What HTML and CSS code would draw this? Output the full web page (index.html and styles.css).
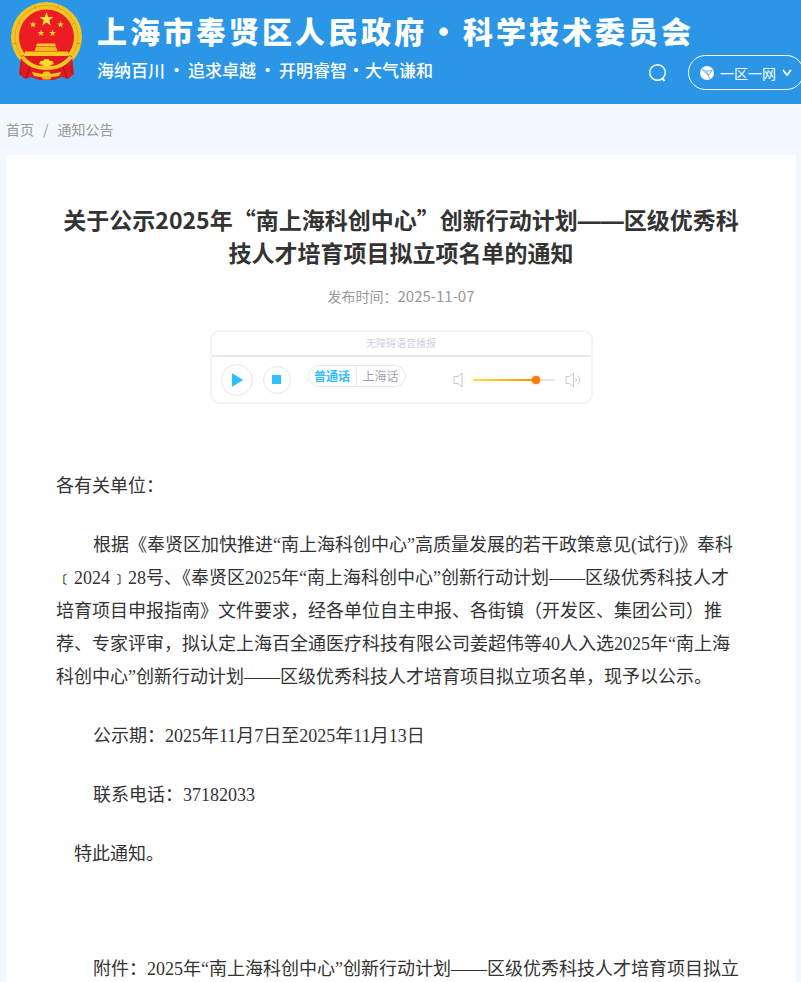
FILE: index.html
```html
<!DOCTYPE html>
<html lang="zh-CN">
  <head>
    <meta charset="UTF-8" />
    <meta name="viewport" content="width=device-width, initial-scale=1.0" />
    <title>上海市奉贤区科学技术委员会 - 通知公告</title>
    <link rel="stylesheet" href="styles.css">
  </head>
  <body>
    <header class="header">
      <svg class="emblem" viewBox="0 0 76 84" aria-hidden="true">
        <ellipse cx="38.500" cy="37" rx="35.500" ry="35" fill="#f3c424" />
        <circle cx="38.500" cy="37" r="31.500" fill="none" stroke="#e2a61c" stroke-width="1" />
        <path d="M10 22 L13 25 M67 22 L64 25 M4 44 L9 43 M73 44 L68 43 M26 5 L28 9 M51 5 L49 9" stroke="#d99a17" fill="none" />
        <circle cx="38.500" cy="37" r="27.500" fill="#ec1c24" />
        <path d="M13 56 L22 54 H55 L64 56 L66 74 L60 79 L54 77 L46 80 H31 L23 77 L17 79 L11 74 Z" fill="#e01a22" />
        <path d="M38.500 12 L40.200 17 L45.500 17.100 L41.300 20.300 L42.800 25.400 L38.500 22.400 L34.200 25.400 L35.700 20.300 L31.500 17.100 L36.800 17 Z" fill="#ffe23a" />
        <g fill="#ffd92e">
          <path id="star" d="M25 21 L25.800 23.500 L28.400 23.500 L26.300 25 L27.100 27.500 L25 26 L22.900 27.500 L23.700 25 L21.600 23.500 L24.200 23.500 Z" />
          <use href="#star" x="27.500" />
          <use href="#star" x="8" y="8.500" />
          <use href="#star" x="19.500" y="8.500" />
        </g>
        <path d="M29 43.500 H47 L48 46.500 H28 Z" fill="#f7c821" />
        <path d="M28 47 H48 L49.500 51 H26.500 Z" fill="#f0ba1e" />
        <path d="M17 51.500 H60 L61 56 H16 Z" fill="#f7c821" />
        <path d="M16 56 C20 61 26 65 33 66 L38.500 64.500 L44 66 C51 65 57 61 61 56 L65 57 C59 66 50 70 38.500 70 S18 66 12 57 Z" fill="#f7c821" />
        <path d="M31 64 L32.500 61 L35 61 L36.500 59 L40.500 59 L42 61 L44.500 61 L46 64 L38.500 66.500 Z" fill="#ffd92e" />
        <path d="M24 72 L34 74 L36 71.500 H41 L43 74 L53 72 L51 76 L44 77 L38.500 78 L33 77 L26 76 Z" fill="#f7c821" />
        <path d="M33 76 L44 76 L42 79.500 H35 Z" fill="#f3b81c" />
        <path d="M22 67 L18 78 M55 67 L59 78" stroke="#a31018" fill="none" />
        <path d="M13 63 V74 M64 63 V74" stroke="#b8141c" fill="none" />
      </svg>
      <div class="brand">
        <h1 class="brand-name">上海市奉贤区人民政府<span class="brand-dot">•</span>科学技术委员会</h1>
        <div class="brand-row">
          <div class="slogan">
            <span>海纳百川</span><span class="slogan-dot">·</span><span>追求卓越</span><span class="slogan-dot">·</span><span>开明睿智</span><span class="slogan-dot small">·</span><span>大气谦和</span>
          </div>
          <div class="tools">
            <button class="search-button" type="button" aria-label="搜索">
              <svg width="20" height="20" viewBox="0 0 20 20" fill="none" stroke="#fff" stroke-width="1.500">
                <circle cx="9.500" cy="9.500" r="7.800" />
                <path d="M14 15 L16.500 17.800" stroke-width="2" />
              </svg>
            </button>
            <button class="site-button" type="button">
              <svg width="14" height="14" viewBox="0 0 14 14">
                <circle cx="7" cy="7" r="7" fill="#fff" />
                <path d="M2 3.500 L6.500 5.200 L12 4.500 L8.500 9.500 Z M6.500 5.200 L9.500 12.500" stroke="#5cadeb" stroke-width="0.900" fill="none" />
              </svg>
              <span>一区一网</span>
              <svg width="10" height="8" viewBox="0 0 10 8" fill="none" stroke="#fff" stroke-width="1.800"><path d="M1 1 L5 6 L9 1" /></svg>
            </button>
          </div>
        </div>
      </div>
    </header>

    <nav class="breadcrumb">
      <a href="#">首页</a><span class="slash">/</span><a href="#">通知公告</a>
    </nav>

    <main class="article">
      <h2 class="article-title">关于公示2025年“南上海科创中心”创新行动计划<span class="dash">——</span>区级优秀科技人才培育项目拟立项名单的通知</h2>
      <div class="article-date">发布时间：<time>2025-11-07</time></div>

      <div class="player">
        <div class="player-title">无障碍语音播报</div>
        <div class="player-controls">
          <button class="play-button" type="button" aria-label="播放">
            <svg width="12" height="14" viewBox="0 0 12 14"><path d="M1.500 1 L11.500 7 L1.500 13 Z" fill="#2fc0fb" stroke="#2fc0fb" stroke-linejoin="round" /></svg>
          </button>
          <button class="stop-button" type="button" aria-label="停止">
            <svg width="9" height="9" viewBox="0 0 9 9"><rect width="9" height="9" fill="#2fc0fb" /></svg>
          </button>
          <div class="lang-switch">
            <button class="lang-button active" type="button">普通话</button>
            <button class="lang-button" type="button">上海话</button>
          </div>
          <div class="volume">
            <svg width="16" height="16" viewBox="0 0 16 16" fill="none" stroke="#c9c9d2"><path d="M9 1 L5 4.500 H1 V11.500 H5 L9 15 Z" /></svg>
            <input class="volume-range" type="range" min="0" max="100" value="80" aria-label="音量" />
            <svg width="16" height="16" viewBox="0 0 16 16" fill="none" stroke="#c9c9d2"><path d="M8.500 1 L4.500 4.500 H1 V11.500 H4.500 L8.500 15 Z M10.500 6 Q12.500 8 10.500 10 M12.500 3.500 Q17 8 12.500 12.500" /></svg>
          </div>
        </div>
      </div>

      <div class="article-body">
        <p>各有关单位：</p>
        <p class="indent">根据《奉贤区加快推进“南上海科创中心”高质量发展的若干政策意见(试行)》奉科﹝2024﹞28号、《奉贤区2025年“南上海科创中心”创新行动计划——区级优秀科技人才培育项目申报指南》文件要求，经各单位自主申报、各街镇（开发区、集团公司）推荐、专家评审，拟认定上海百全通医疗科技有限公司姜超伟等40人入选2025年“南上海科创中心”创新行动计划——区级优秀科技人才培育项目拟立项名单，现予以公示。</p>
        <p class="indent">公示期：2025年11月7日至2025年11月13日</p>
        <p class="indent">联系电话：37182033</p>
        <p class="closing">特此通知。</p>
        <p class="indent attachment">附件：2025年“南上海科创中心”创新行动计划——区级优秀科技人才培育项目拟立项名单</p>
      </div>
    </main>
  </body>
</html>
```
FILE: styles.css
```css
* {
  box-sizing: border-box;
}
body {
  margin: 0;
  background-color: #f3f8ff;
  font-family: "Noto Sans CJK SC", sans-serif;
  color: #333;
}
button {
  padding: 0;
  border: 0;
  background: none;
  font-family: inherit;
  cursor: pointer;
}
p,
h1,
h2 {
  margin: 0;
}

/* header */
.header {
  display: flex;
  height: 104px;
  padding-left: 8px;
  background-color: #2b96e5;
  color: #fff;
  overflow: hidden;
}
.emblem {
  flex: none;
  width: 76px;
  height: 84px;
}
.brand {
  flex: 1;
  padding: 8px 0 0 13px;
  white-space: nowrap;
}
.brand-name {
  font-size: 30px;
  font-weight: 900;
  line-height: 44px;
  letter-spacing: 3px;
}
.brand-dot {
  display: inline-block;
  width: 36px;
  text-align: center;
}
.brand-row {
  display: flex;
  justify-content: space-between;
  align-items: flex-start;
  margin-right: -3px;
}
.slogan {
  display: flex;
  font-size: 17px;
  font-weight: 500;
  line-height: 36px;
}
.slogan-dot {
  width: 23px;
  text-align: center;
}
.slogan-dot.small {
  width: 18px;
}
.tools {
  display: flex;
  align-items: center;
  gap: 20px;
  padding-top: 3px;
}
.search-button,
.search-button svg {
  display: block;
}
.site-button {
  display: flex;
  align-items: center;
  justify-content: center;
  gap: 6px;
  width: 116px;
  height: 35px;
  border: 1px solid #fff;
  border-radius: 18px;
  color: #fff;
  font-size: 14px;
}

/* breadcrumb */
.breadcrumb {
  display: flex;
  gap: 9px;
  height: 51px;
  padding-left: 6px;
  font-size: 14px;
  line-height: 51px;
  color: #999;
}
.breadcrumb a {
  color: #999;
  text-decoration: none;
}

/* article */
.article {
  margin: 0 5px 0 6px;
  padding: 48px 50px;
  background-color: #fff;
}
.article-title {
  font-size: 23px;
  font-weight: bold;
  line-height: 33px;
  text-align: center;
}
.article-title .dash {
  font-family: "Liberation Sans", sans-serif;
  line-height: 1;
}
.article-date {
  margin-top: 17px;
  font-size: 14px;
  line-height: 20px;
  text-align: center;
  color: #999;
}
.article-date time {
  font-size: 15px;
}

/* voice player */
.player {
  max-width: 383px;
  margin: 24px auto 0;
  border: 2px solid #f3f3f5;
  border-radius: 10px;
}
.player-title {
  height: 25px;
  border-bottom: 2px solid #e6e8f0;
  font-size: 10px;
  line-height: 22px;
  text-align: center;
  color: #cfd1dd;
}
.player-controls {
  display: flex;
  align-items: center;
  height: 45px;
  padding: 0 10px 0 9px;
}
.play-button,
.stop-button {
  display: flex;
  align-items: center;
  justify-content: center;
  width: 32px;
  height: 32px;
  border: 1px solid #e6e6f0;
  border-radius: 50%;
}
.stop-button {
  width: 28px;
  height: 28px;
  margin-left: 10px;
}
.lang-switch {
  display: flex;
  margin: 0 0 8px 17px;
  border: 1px solid #e6e6f0;
  border-radius: 11px;
}
.lang-button {
  width: 48px;
  height: 20px;
  font-size: 12px;
  line-height: 20px;
  color: #a0a0b4;
}
.lang-button.active {
  border-right: 1px solid #e6e6f0;
  font-weight: bold;
  color: #2fc0fb;
}
.volume {
  display: flex;
  align-items: center;
  gap: 8px;
  margin-left: auto;
}
.volume-range {
  width: 82px;
  height: 12px;
  margin: 0 2px 0 -4px;
  appearance: none;
  background: linear-gradient(to right, #ffe03c, #ff8a00 78%, #e6e6ee 78%) center / 100% 2px no-repeat;
}
.volume-range::-webkit-slider-thumb {
  appearance: none;
  width: 8px;
  height: 8px;
  border-radius: 50%;
  background-color: #ff7a00;
  box-shadow: 0 0 2px #ff9a3c;
}

/* notice text */
.article-body {
  margin-top: 66px;
  font-family: "Liberation Serif", "Noto Sans CJK SC", serif;
  font-size: 18px;
  line-height: 33px;
}
.article-body p + p {
  margin-top: 26px;
}
.indent {
  text-indent: 37px;
}
.closing {
  text-indent: 18px;
}
.article-body p.attachment {
  margin-top: 82px;
}
```
